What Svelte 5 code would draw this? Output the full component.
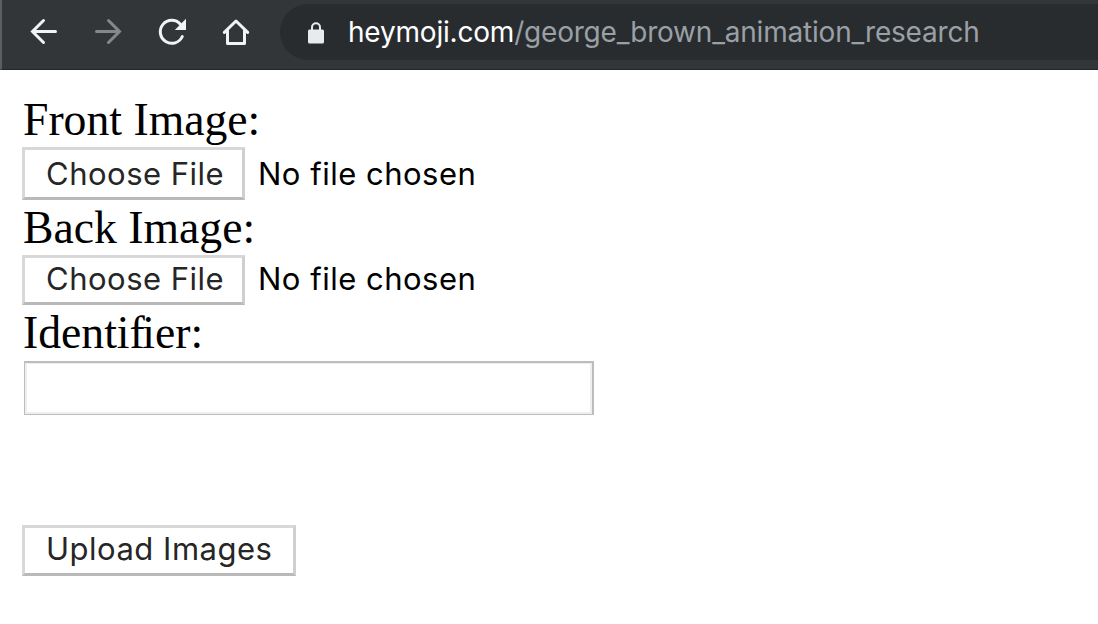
<script>
  const files = [
    { label: 'Front Image:', kind: 'front' },
    { label: 'Back Image:', kind: 'back' }
  ];
</script>

<div class="window">
  <header class="toolbar">
    <svg class="nav" width="280" height="70" viewBox="0 0 280 70" fill="none" stroke="#f1f3f4" stroke-width="3" stroke-linecap="round">
      <path d="M55.500 31.500H33M43.500 20.500L32.500 31.500L43.500 42.500" />
      <path stroke="#85888a" d="M96.500 31.500H119M108.500 20.500L119.500 31.500L108.500 42.500" />
      <path d="M182.300 36.500A11.500 11.500 0 1 1 180.400 24.200" />
      <path d="M186 18.800V30H174.800Z" fill="#f1f3f4" stroke="none" />
      <path stroke-linejoin="round" d="M224.300 32.400L236 21L247.700 32.400M227.500 30.500V43.500H244.500V30.500" />
    </svg>
    <div class="address">
      <svg width="16" height="22" viewBox="0 0 16 22">
        <path d="M4 8V5.200a4 4 0 0 1 8 0V8" fill="none" stroke="#e8eaed" stroke-width="2" />
        <rect y="7.500" width="16" height="14" rx="1.500" fill="#e8eaed" />
      </svg>
      <div class="url"><span class="host">heymoji.com</span><span class="path">/george_brown_animation_research</span></div>
    </div>
  </header>

  <main>
    {#each files as file}
      <div class="label {file.kind}">{file.label}</div>
      <div class="file {file.kind}">
        <button type="button">Choose File</button>
        <span class="status">No file chosen</span>
      </div>
    {/each}
    <div class="label ident">Identi<span class="kern">f</span>ier:</div>
    <input type="text" aria-label="Identifier" />
    <button type="button" class="upload">Upload Images</button>
  </main>
</div>

<style>
  :global(body) {
    margin: 0;
    background: #fff;
  }
  .window {
    width: 1098px;
    height: 624px;
    overflow: hidden;
    background: #fff;
  }
  .toolbar {
    box-sizing: border-box;
    height: 70px;
    display: flex;
    background: #323639;
    border-left: 2px solid #5b5e61;
    border-bottom: 1px solid #25282a;
  }
  .nav {
    flex: none;
    margin-left: -2px;
  }
  .address {
    flex: 1;
    box-sizing: border-box;
    height: 56px;
    margin-top: 4px;
    padding-left: 28px;
    display: flex;
    align-items: center;
    background: #282c2f;
    border-radius: 28px 0 0 28px;
  }
  .address svg {
    flex: none;
    margin-top: 1px;
  }
  .url {
    margin-left: 24px;
    font: 28px/56px Inter, sans-serif;
    letter-spacing: -0.2px;
    white-space: nowrap;
    color: #9aa0a6;
  }
  .host {
    color: #fff;
  }
  main {
    padding: 23px 22px 0;
    display: flex;
    flex-direction: column;
    align-items: flex-start;
  }
  .label {
    height: 54px;
    padding-left: 1px;
    font: 45.7px/54px "Liberation Serif", serif;
    color: #000;
    white-space: nowrap;
  }
  .file {
    display: flex;
    height: 53px;
    font: 31px/48px Inter, sans-serif;
    white-space: nowrap;
  }
  .label.back {
    height: 55px;
    line-height: 56px;
  }
  .file.back {
    height: 50px;
    line-height: 42px;
  }
  .label.ident {
    height: 56px;
    line-height: 56px;
  }
  .kern {
    letter-spacing: -2.5px;
  }
  button {
    box-sizing: border-box;
    width: 223px;
    height: 100%;
    margin: 0;
    padding: 0 0 1px 21px;
    border: 3px solid;
    border-color: #d8d8d8 #cfcfcf #b9b9b9 #d8d8d8;
    border-radius: 0;
    background: #fff;
    color: #262626;
    font: inherit;
    text-align: left;
    white-space: nowrap;
    letter-spacing: 0.5px;
  }
  .back button {
    padding-bottom: 3px;
  }
  .status {
    margin-left: 13px;
    line-height: 54px;
    letter-spacing: 0.5px;
    color: #000;
  }
  .back .status {
    line-height: 48px;
  }
  input {
    box-sizing: border-box;
    width: 570px;
    height: 54px;
    margin: 0 0 0 2px;
    padding: 0;
    border: solid #bdbdbd;
    border-width: 2px 2px 1px 1px;
    border-radius: 0;
    outline: none;
    background: #fff;
    box-shadow: inset 2px 1px #eee, inset -2px -2px #eee;
  }
  button.upload {
    width: 274px;
    height: 51px;
    margin-top: 110px;
    padding-bottom: 4px;
    font: 31px/41px Inter, sans-serif;
  }
</style>
